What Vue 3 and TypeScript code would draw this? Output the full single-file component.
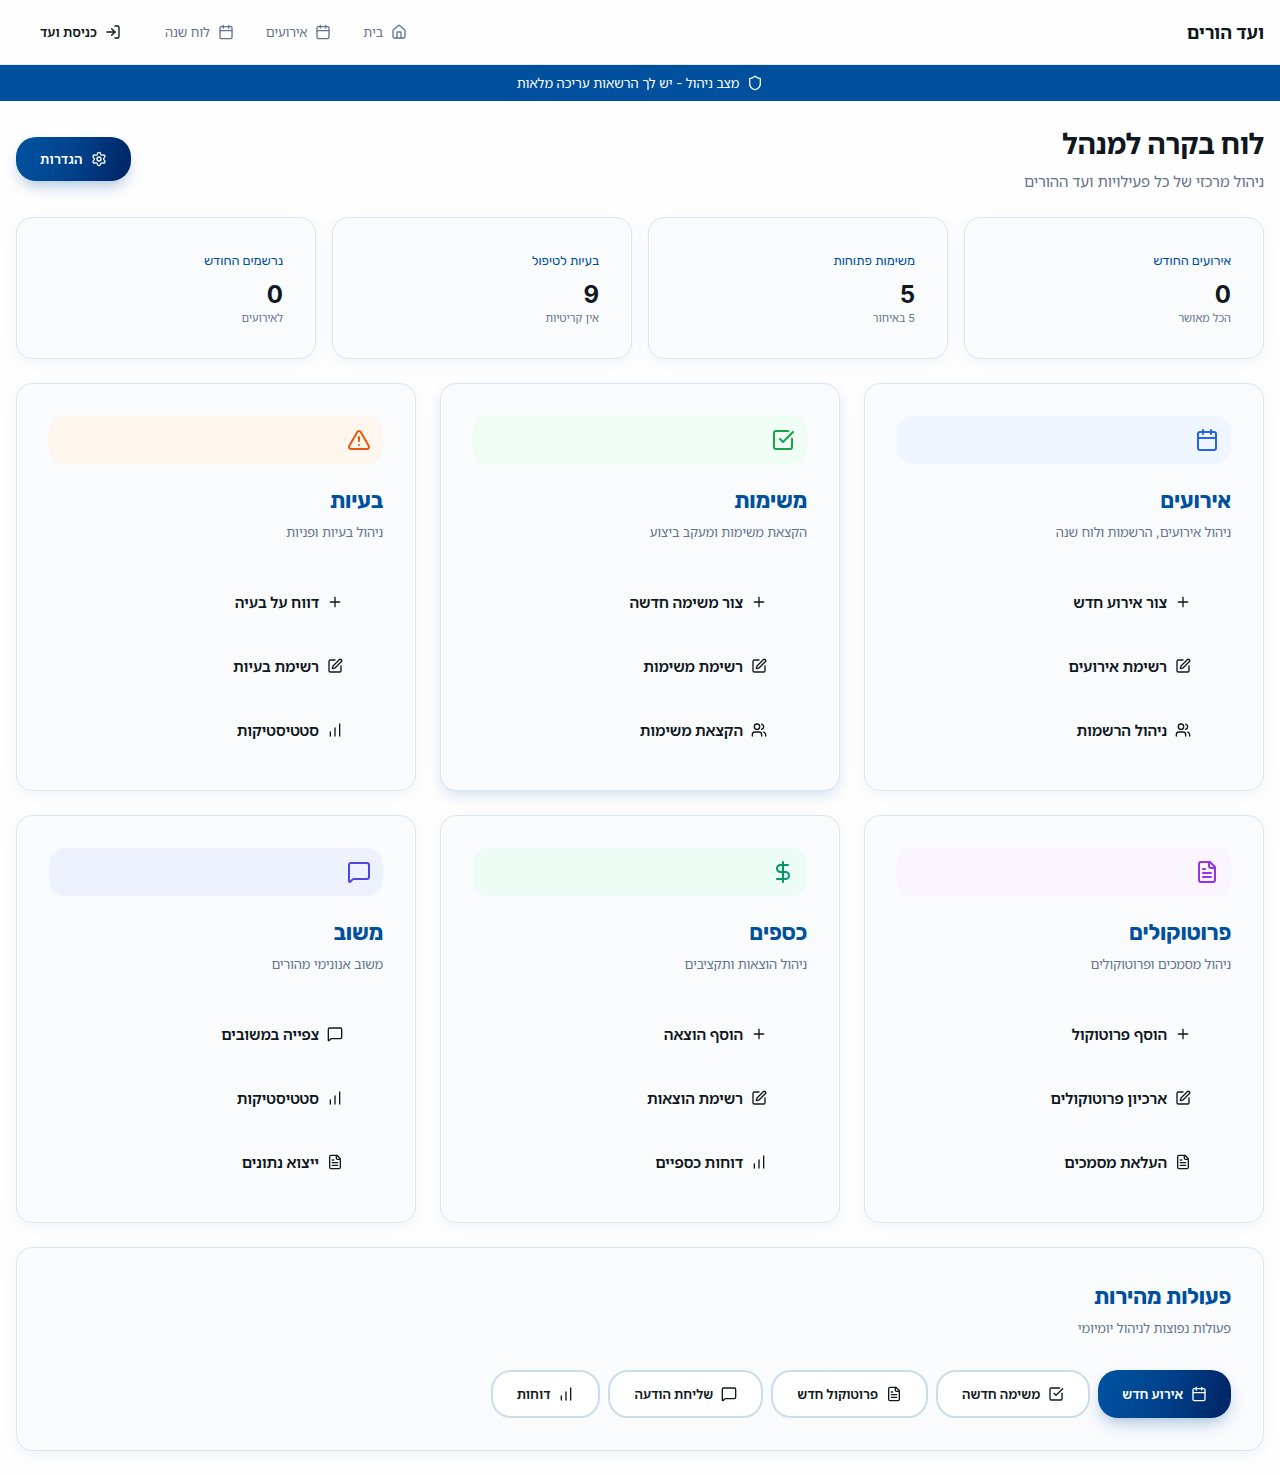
<script setup lang="ts">
import { h, type FunctionalComponent } from 'vue'

type IconName =
  | 'home' | 'calendar' | 'login' | 'shield' | 'settings' | 'check' | 'alert'
  | 'file' | 'dollar' | 'message' | 'plus' | 'edit' | 'users' | 'chart'

const icons: Record<IconName, string[]> = {
  home: ['M15 21v-8a1 1 0 0 0-1-1h-4a1 1 0 0 0-1 1v8', 'M3 10a2 2 0 0 1 .709-1.528l7-5.999a2 2 0 0 1 2.582 0l7 5.999A2 2 0 0 1 21 10v9a2 2 0 0 1-2 2H5a2 2 0 0 1-2-2z'],
  calendar: ['M8 2v4', 'M16 2v4', 'M5 4h14a2 2 0 0 1 2 2v14a2 2 0 0 1-2 2H5a2 2 0 0 1-2-2V6a2 2 0 0 1 2-2z', 'M3 10h18'],
  login: ['m10 17 5-5-5-5', 'M15 12H3', 'M15 3h4a2 2 0 0 1 2 2v14a2 2 0 0 1-2 2h-4'],
  shield: ['M20 13c0 5-3.5 7.5-7.66 8.95a1 1 0 0 1-.67-.01C7.5 20.5 4 18 4 13V6a1 1 0 0 1 1-1c2 0 4.5-1.2 6.24-2.72a1.17 1.17 0 0 1 1.52 0C14.51 3.81 17 5 19 5a1 1 0 0 1 1 1z'],
  settings: ['M9.671 4.136a2.34 2.34 0 0 1 4.659 0 2.34 2.34 0 0 0 3.319 1.915 2.34 2.34 0 0 1 2.33 4.033 2.34 2.34 0 0 0 0 3.831 2.34 2.34 0 0 1-2.33 4.033 2.34 2.34 0 0 0-3.319 1.915 2.34 2.34 0 0 1-4.659 0 2.34 2.34 0 0 0-3.32-1.915 2.34 2.34 0 0 1-2.33-4.033 2.34 2.34 0 0 0 0-3.831A2.34 2.34 0 0 1 6.35 6.051a2.34 2.34 0 0 0 3.319-1.915', 'M15 12a3 3 0 1 1-6 0 3 3 0 0 1 6 0z'],
  check: ['M21 10.656V19a2 2 0 0 1-2 2H5a2 2 0 0 1-2-2V5a2 2 0 0 1 2-2h12.344', 'm9 11 3 3L22 4'],
  alert: ['m21.73 18-8-14a2 2 0 0 0-3.48 0l-8 14A2 2 0 0 0 4 21h16a2 2 0 0 0 1.73-3', 'M12 9v4', 'M12 17h.01'],
  file: ['M15 2H6a2 2 0 0 0-2 2v16a2 2 0 0 0 2 2h12a2 2 0 0 0 2-2V7Z', 'M14 2v4a2 2 0 0 0 2 2h4', 'M10 9H8', 'M16 13H8', 'M16 17H8'],
  dollar: ['M12 2v20', 'M17 5H9.5a3.5 3.5 0 0 0 0 7h5a3.5 3.5 0 0 1 0 7H6'],
  message: ['M22 17a2 2 0 0 1-2 2H6.828a2 2 0 0 0-1.414.586l-2.202 2.202A.71.71 0 0 1 2 21.286V5a2 2 0 0 1 2-2h16a2 2 0 0 1 2 2z'],
  plus: ['M5 12h14', 'M12 5v14'],
  edit: ['M12 3H5a2 2 0 0 0-2 2v14a2 2 0 0 0 2 2h14a2 2 0 0 0 2-2v-7', 'M18.375 2.625a1 1 0 0 1 3 3l-9.013 9.014a2 2 0 0 1-.853.505l-2.873.84a.5.5 0 0 1-.62-.62l.84-2.873a2 2 0 0 1 .506-.852z'],
  users: ['M16 21v-2a4 4 0 0 0-4-4H6a4 4 0 0 0-4 4v2', 'M13 7a4 4 0 1 1-8 0 4 4 0 0 1 8 0z', 'M22 21v-2a4 4 0 0 0-3-3.87', 'M16 3.13a4 4 0 0 1 0 7.75'],
  chart: ['M5 21v-6', 'M12 21V9', 'M19 21V3'],
}

const Icon: FunctionalComponent<{ name: IconName; size?: number }> = ({ name, size = 16 }) =>
  h('svg', {
    width: size, height: size, viewBox: '0 0 24 24', fill: 'none', stroke: 'currentColor',
    'stroke-width': 2, 'stroke-linecap': 'round', 'stroke-linejoin': 'round', style: { flexShrink: 0, display: 'block' },
  }, icons[name].map(d => h('path', { d })))
Icon.props = ['name', 'size']

interface Link { icon: IconName; label: string }
interface Section { tone: string; icon: IconName; title: string; text: string; actions: Link[] }

const nav: Link[] = [
  { icon: 'home', label: 'בית' },
  { icon: 'calendar', label: 'אירועים' },
  { icon: 'calendar', label: 'לוח שנה' },
]

const stats = [
  { label: 'אירועים החודש', value: 0, note: 'הכל מאושר' },
  { label: 'משימות פתוחות', value: 5, note: '5 באיחור' },
  { label: 'בעיות לטיפול', value: 9, note: 'אין קריטיות' },
  { label: 'נרשמים החודש', value: 0, note: 'לאירועים' },
]

const sections: Section[] = [
  { tone: 'blue', icon: 'calendar', title: 'אירועים', text: 'ניהול אירועים, הרשמות ולוח שנה', actions: [
    { icon: 'plus', label: 'צור אירוע חדש' }, { icon: 'edit', label: 'רשימת אירועים' }, { icon: 'users', label: 'ניהול הרשמות' }] },
  { tone: 'green', icon: 'check', title: 'משימות', text: 'הקצאת משימות ומעקב ביצוע', actions: [
    { icon: 'plus', label: 'צור משימה חדשה' }, { icon: 'edit', label: 'רשימת משימות' }, { icon: 'users', label: 'הקצאת משימות' }] },
  { tone: 'orange', icon: 'alert', title: 'בעיות', text: 'ניהול בעיות ופניות', actions: [
    { icon: 'plus', label: 'דווח על בעיה' }, { icon: 'edit', label: 'רשימת בעיות' }, { icon: 'chart', label: 'סטטיסטיקות' }] },
  { tone: 'purple', icon: 'file', title: 'פרוטוקולים', text: 'ניהול מסמכים ופרוטוקולים', actions: [
    { icon: 'plus', label: 'הוסף פרוטוקול' }, { icon: 'edit', label: 'ארכיון פרוטוקולים' }, { icon: 'file', label: 'העלאת מסמכים' }] },
  { tone: 'emerald', icon: 'dollar', title: 'כספים', text: 'ניהול הוצאות ותקציבים', actions: [
    { icon: 'plus', label: 'הוסף הוצאה' }, { icon: 'edit', label: 'רשימת הוצאות' }, { icon: 'chart', label: 'דוחות כספיים' }] },
  { tone: 'indigo', icon: 'message', title: 'משוב', text: 'משוב אנונימי מהורים', actions: [
    { icon: 'message', label: 'צפייה במשובים' }, { icon: 'chart', label: 'סטטיסטיקות' }, { icon: 'file', label: 'ייצוא נתונים' }] },
]

const quick: Link[] = [
  { icon: 'calendar', label: 'אירוע חדש' },
  { icon: 'check', label: 'משימה חדשה' },
  { icon: 'file', label: 'פרוטוקול חדש' },
  { icon: 'message', label: 'שליחת הודעה' },
  { icon: 'chart', label: 'דוחות' },
]
</script>

<template>
  <div class="page" dir="rtl">
    <header class="topbar">
      <a class="brand">ועד הורים</a>
      <nav class="nav">
        <a v-for="item in nav" :key="item.label" class="nav-link"><Icon :name="item.icon" /><span>{{ item.label }}</span></a>
        <button class="login"><Icon name="login" /><span>כניסת ועד</span></button>
      </nav>
    </header>
    <div class="banner"><Icon name="shield" /><span>מצב ניהול - יש לך הרשאות עריכה מלאות</span></div>

    <main class="main">
      <div class="heading">
        <div class="heading-text">
          <h1>לוח בקרה למנהל</h1>
          <p>ניהול מרכזי של כל פעילויות ועד ההורים</p>
        </div>
        <button class="btn primary settings"><Icon name="settings" /><span>הגדרות</span></button>
      </div>

      <div class="stats">
        <div v-for="s in stats" :key="s.label" class="card">
          <div class="stat-label">{{ s.label }}</div>
          <div class="stat-value">{{ s.value }}</div>
          <div class="stat-note">{{ s.note }}</div>
        </div>
      </div>

      <div class="sections">
        <section v-for="s in sections" :key="s.title" class="card" :class="{ raised: s.tone === 'green' }">
          <div class="tile" :class="s.tone"><Icon :name="s.icon" :size="24" /></div>
          <h3>{{ s.title }}</h3>
          <p class="desc">{{ s.text }}</p>
          <div class="actions">
            <button v-for="a in s.actions" :key="a.label" class="action"><Icon :name="a.icon" /><span>{{ a.label }}</span></button>
          </div>
        </section>
      </div>

      <section class="card">
        <h3>פעולות מהירות</h3>
        <p class="desc">פעולות נפוצות לניהול יומיומי</p>
        <div class="quick">
          <button v-for="(q, i) in quick" :key="q.label" class="btn" :class="i === 0 ? 'primary' : 'outline'"><Icon :name="q.icon" /><span>{{ q.label }}</span></button>
        </div>
      </section>
    </main>
  </div>
</template>

<style>
body { margin: 0; background: #fefefe; }
</style>

<style scoped>
* { box-sizing: border-box; }
.page { font-family: Inter, "Noto Sans Hebrew", "Open Sans", sans-serif; color: #0f1720; font-size: 15px; line-height: 24px; }
h1, h3, p { margin: 0; }
button { font: inherit; color: inherit; border: 0; background: none; margin: 0; }
.topbar { display: flex; justify-content: space-between; align-items: center; height: 65px; padding: 0 16px; border-bottom: 1px solid #dfe6f0; }
.brand { padding-top: 2px; font-size: 18px; line-height: 28px; font-weight: 700; }
.nav { display: flex; align-items: center; gap: 32px; font-size: 13px; line-height: 20px; }
.nav-link { display: flex; align-items: center; gap: 8px; color: #64748b; letter-spacing: -.1px; }
.login { display: flex; align-items: center; gap: 8px; height: 36px; padding: 0 24px; margin-inline-start: -12px; font-size: 13px; font-weight: 600; letter-spacing: .05px; }
.banner { display: flex; align-items: center; justify-content: center; gap: 8px; height: 36px; background: #00509d; color: #fff; font-size: 13px; line-height: 20px; letter-spacing: -.02px; }
.main { display: flex; flex-direction: column; gap: 24px; padding: 24px 16px; }
.heading { display: flex; justify-content: space-between; align-items: center; height: 68px; }
.heading-text { padding-top: 2px; }
h1 { font-size: 28px; line-height: 36px; font-weight: 700; letter-spacing: -.34px; }
.heading p { margin-top: 8px; color: #64748b; letter-spacing: -.17px; }
.btn { display: flex; align-items: center; gap: 8px; height: 48px; padding: 0 24px; border-radius: 20px; font-size: 13px; line-height: 20px; font-weight: 600; white-space: nowrap; }
.settings { height: 44px; letter-spacing: .3px; }
.primary { color: #fff; background: linear-gradient(105deg, #00509d 10%, #003f88 55%, #00296b 90%); box-shadow: 0 8px 16px -4px rgba(0, 80, 157, .35); }
.outline { border: 2px solid #ccdcec; background: #fff; }
.card { border: 1px solid #dde4f0; border-radius: 16px; padding: 32px; background: #f9fbfd; box-shadow: 0 4px 16px rgba(0, 80, 157, .06); }
.raised { box-shadow: 0 6px 14px -1px rgba(0, 80, 157, .15); }
.stats { display: grid; grid-template-columns: repeat(4, 1fr); gap: 16px; }
.stat-label { font-family: Rubik, "Noto Sans Hebrew", sans-serif; padding-top: 1px; font-size: 13px; line-height: 20px; color: #00509d; letter-spacing: -.05px; margin-bottom: 8px; }
.stat-value { font-size: 24px; line-height: 32px; font-weight: 700; }
.stat-note { margin-top: -1px; font-size: 11px; line-height: 16px; color: #64748b; }
.sections { display: grid; grid-template-columns: repeat(3, 1fr); gap: 24px; }
.tile { display: flex; padding: 12px; border-radius: 16px; margin-bottom: 20px; }
.blue { background: #eff6ff; color: #2563eb; }
.green { background: #f0fdf4; color: #16a34a; }
.orange { background: #fff7ed; color: #ea580c; }
.purple { background: #faf5ff; color: #9333ea; }
.emerald { background: #ecfdf5; color: #059669; }
.indigo { background: #eef2ff; color: #4f46e5; }
h3 { font-family: Rubik, "Noto Sans Hebrew", sans-serif; font-size: 22px; line-height: 30px; font-weight: 700; letter-spacing: -.28px; padding-top: 2px; height: 30px; color: #00509d; }
.desc { margin-top: 8px; font-size: 13px; line-height: 20px; letter-spacing: -.14px; color: #64748b; }
.actions { display: flex; flex-direction: column; gap: 8px; margin-top: 32px; }
.action { display: flex; align-items: center; gap: 8px; height: 56px; padding: 0 40px; font-weight: 600; letter-spacing: -.12px; }
.action span { padding-top: 2px; }
.quick { display: flex; gap: 8px; margin-top: 32px; }
</style>
